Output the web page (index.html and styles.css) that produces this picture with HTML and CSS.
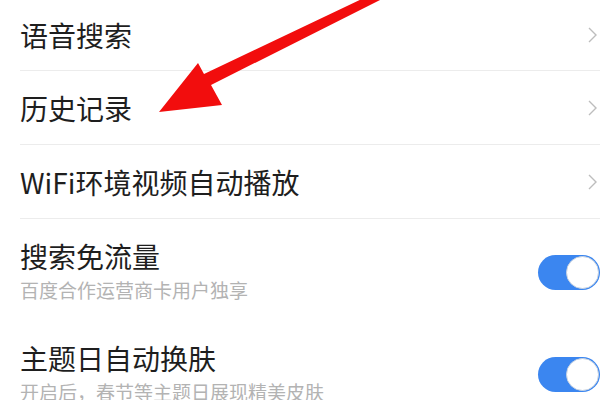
FILE: index.html
```html
<!DOCTYPE html>
<html lang="zh-CN">
<head>
  <meta charset="UTF-8">
  <title>设置</title>
  <link rel="stylesheet" href="styles.css">
</head>
<body>

  <ul class="settings">
    <li class="row link first">
      <span class="title">语音搜索</span>
      <svg class="chevron" width="10" height="18" viewBox="0 0 10 18"><polyline points="1,2 8,9 1,16" /></svg>
    </li>
    <li class="row link">
      <span class="title">历史记录</span>
      <svg class="chevron" width="10" height="18" viewBox="0 0 10 18"><polyline points="1,2 8,9 1,16" /></svg>
    </li>
    <li class="row link">
      <span class="title">WiFi环境视频自动播放</span>
      <svg class="chevron" width="10" height="18" viewBox="0 0 10 18"><polyline points="1,2 8,9 1,16" /></svg>
    </li>

    <!-- switches -->
    <li class="row switch">
      <div class="text">
        <div class="title">搜索免流量</div>
        <div class="desc">百度合作运营商卡用户独享</div>
      </div>
      <span class="toggle on"><span class="knob"></span></span>
    </li>
    <li class="row switch">
      <div class="text">
        <div class="title">主题日自动换肤</div>
        <div class="desc">开启后，春节等主题日展现精美皮肤</div>
      </div>
      <span class="toggle on"><span class="knob"></span></span>
    </li>
  </ul>

  <svg class="arrow" width="600" height="400" viewBox="0 0 600 400">
    <polygon points="159,112 198,63 204,74 366,-3 386,-3 211,85 222,105" />
  </svg>

</body>
</html>
```

FILE: styles.css
```css
body { margin: 0; background: #fff; font-family: "Noto Sans CJK SC", "Noto Sans", sans-serif; color: #1e1e1e; position: relative; overflow: hidden; }
.settings { list-style: none; margin: 0; padding: 0 0 0 20px; }
.row { display: flex; align-items: center; justify-content: space-between; }
.link { height: 73px; border-bottom: 1px solid #ececec; }
.link.first { height: 70px; }
.title { font-size: 28px; line-height: 36px; }
.chevron { margin-right: 2px; fill: none; stroke: #bdbdbd; stroke-width: 1.4; }
.switch { padding: 19px 0 15px; }
.desc { font-size: 19px; line-height: 32px; color: #b3b3b3; }
.toggle { width: 62px; height: 35px; border-radius: 18px; background: #e0e0e0; display: flex; align-items: center; justify-content: flex-end; box-sizing: border-box; padding: 1px; }
.toggle.on { background: #3b86f0; }
.knob { width: 33px; height: 33px; border-radius: 50%; background: #fff; box-sizing: border-box; border: 1px solid #c9d3e0; }
.arrow { position: absolute; left: 0; top: 0; fill: #f20d0d; }
```
